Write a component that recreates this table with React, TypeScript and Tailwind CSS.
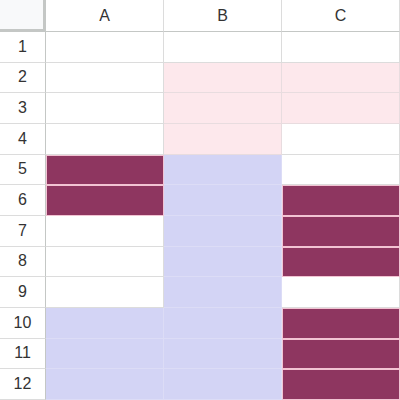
import React from "react";

type Fill = "w" | "p" | "b" | "m";

const rows: Fill[][] = [
  ["w", "w", "w"],
  ["w", "p", "p"],
  ["w", "p", "p"],
  ["w", "p", "w"],
  ["m", "b", "w"],
  ["m", "b", "m"],
  ["w", "b", "m"],
  ["w", "b", "m"],
  ["w", "b", "w"],
  ["b", "b", "m"],
  ["b", "b", "m"],
  ["b", "b", "m"],
];

const cls: Record<Fill, string> = {
  w: "bg-white border-r border-b border-[#dcdcdc]",
  p: "bg-[#fde8ec] border-r border-b border-[#e8dcdf]",
  b: "bg-[#d3d4f5] border-r border-b border-[#dcdcf6]",
  m: "bg-[#8e3660] border border-[#f2c4d3]",
};

export default function App() {
  return (
    <div
      className="w-[400px] h-[400px] overflow-hidden bg-white grid grid-cols-[46px_repeat(3,1fr)] grid-rows-[32px_repeat(12,1fr)] text-[16px] text-[#333333]"
      style={{ fontFamily: '"Liberation Sans", Arial, sans-serif' }}
    >
      <div className="bg-[#f8f9fa] border-r-[3px] border-b-[3px] border-[#c4c7c5]" />
      {["A", "B", "C"].map((c) => (
        <div
          key={c}
          className="bg-white border-r border-b border-r-[#dcdcdc] border-b-[#c4c7c5] flex items-center justify-center"
        >
          {c}
        </div>
      ))}
      {rows.map((r, i) => (
        <React.Fragment key={i}>
          <div className="bg-white border-r border-b border-r-[#c4c7c5] border-b-[#dcdcdc] flex items-center justify-center">
            {i + 1}
          </div>
          {r.map((f, j) => (
            <div key={j} className={cls[f]} />
          ))}
        </React.Fragment>
      ))}
    </div>
  );
}
